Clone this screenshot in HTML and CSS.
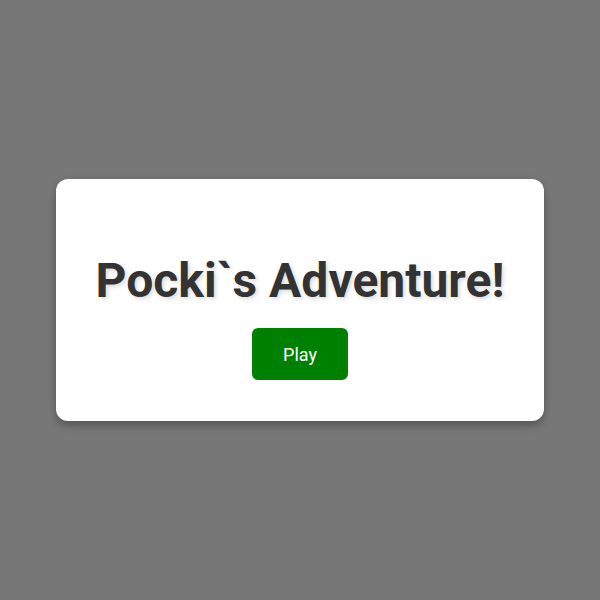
FILE: index.html
```html
<!DOCTYPE html>
<html>
<head>
<meta charset="utf-8">
<link rel="stylesheet" href="styles.css">
</head>
<body>
<div class="card">
  <h1 class="title">Pocki`s Adventure!</h1>
  <button class="play">Play</button>
</div>
</body>
</html>
```

FILE: styles.css
```css
html, body {
  margin: 0;
  height: 100%;
}
body {
  background: #777777;
  font-family: Roboto, "Liberation Sans", sans-serif;
  display: flex;
  align-items: center;
  justify-content: center;
}
.card {
  box-sizing: border-box;
  width: 488px;
  height: 242px;
  background: #ffffff;
  border-radius: 12px;
  box-shadow: 0 4px 8px rgba(0, 0, 0, 0.3);
  padding: 73px 20px 41px;
  display: flex;
  flex-direction: column;
  align-items: center;
}
.title {
  margin: 0 0 19px;
  font-size: 48px;
  font-weight: 700;
  color: #333333;
  text-shadow: 2px 2px 4px rgba(0, 0, 0, 0.15);
  line-height: normal;
}
.play {
  width: 96px;
  height: 53px;
  background: #008000;
  color: #ffffff;
  border: none;
  border-radius: 6px;
  font-family: Roboto, "Liberation Sans", sans-serif;
  font-size: 18px;
  cursor: pointer;
}
```
